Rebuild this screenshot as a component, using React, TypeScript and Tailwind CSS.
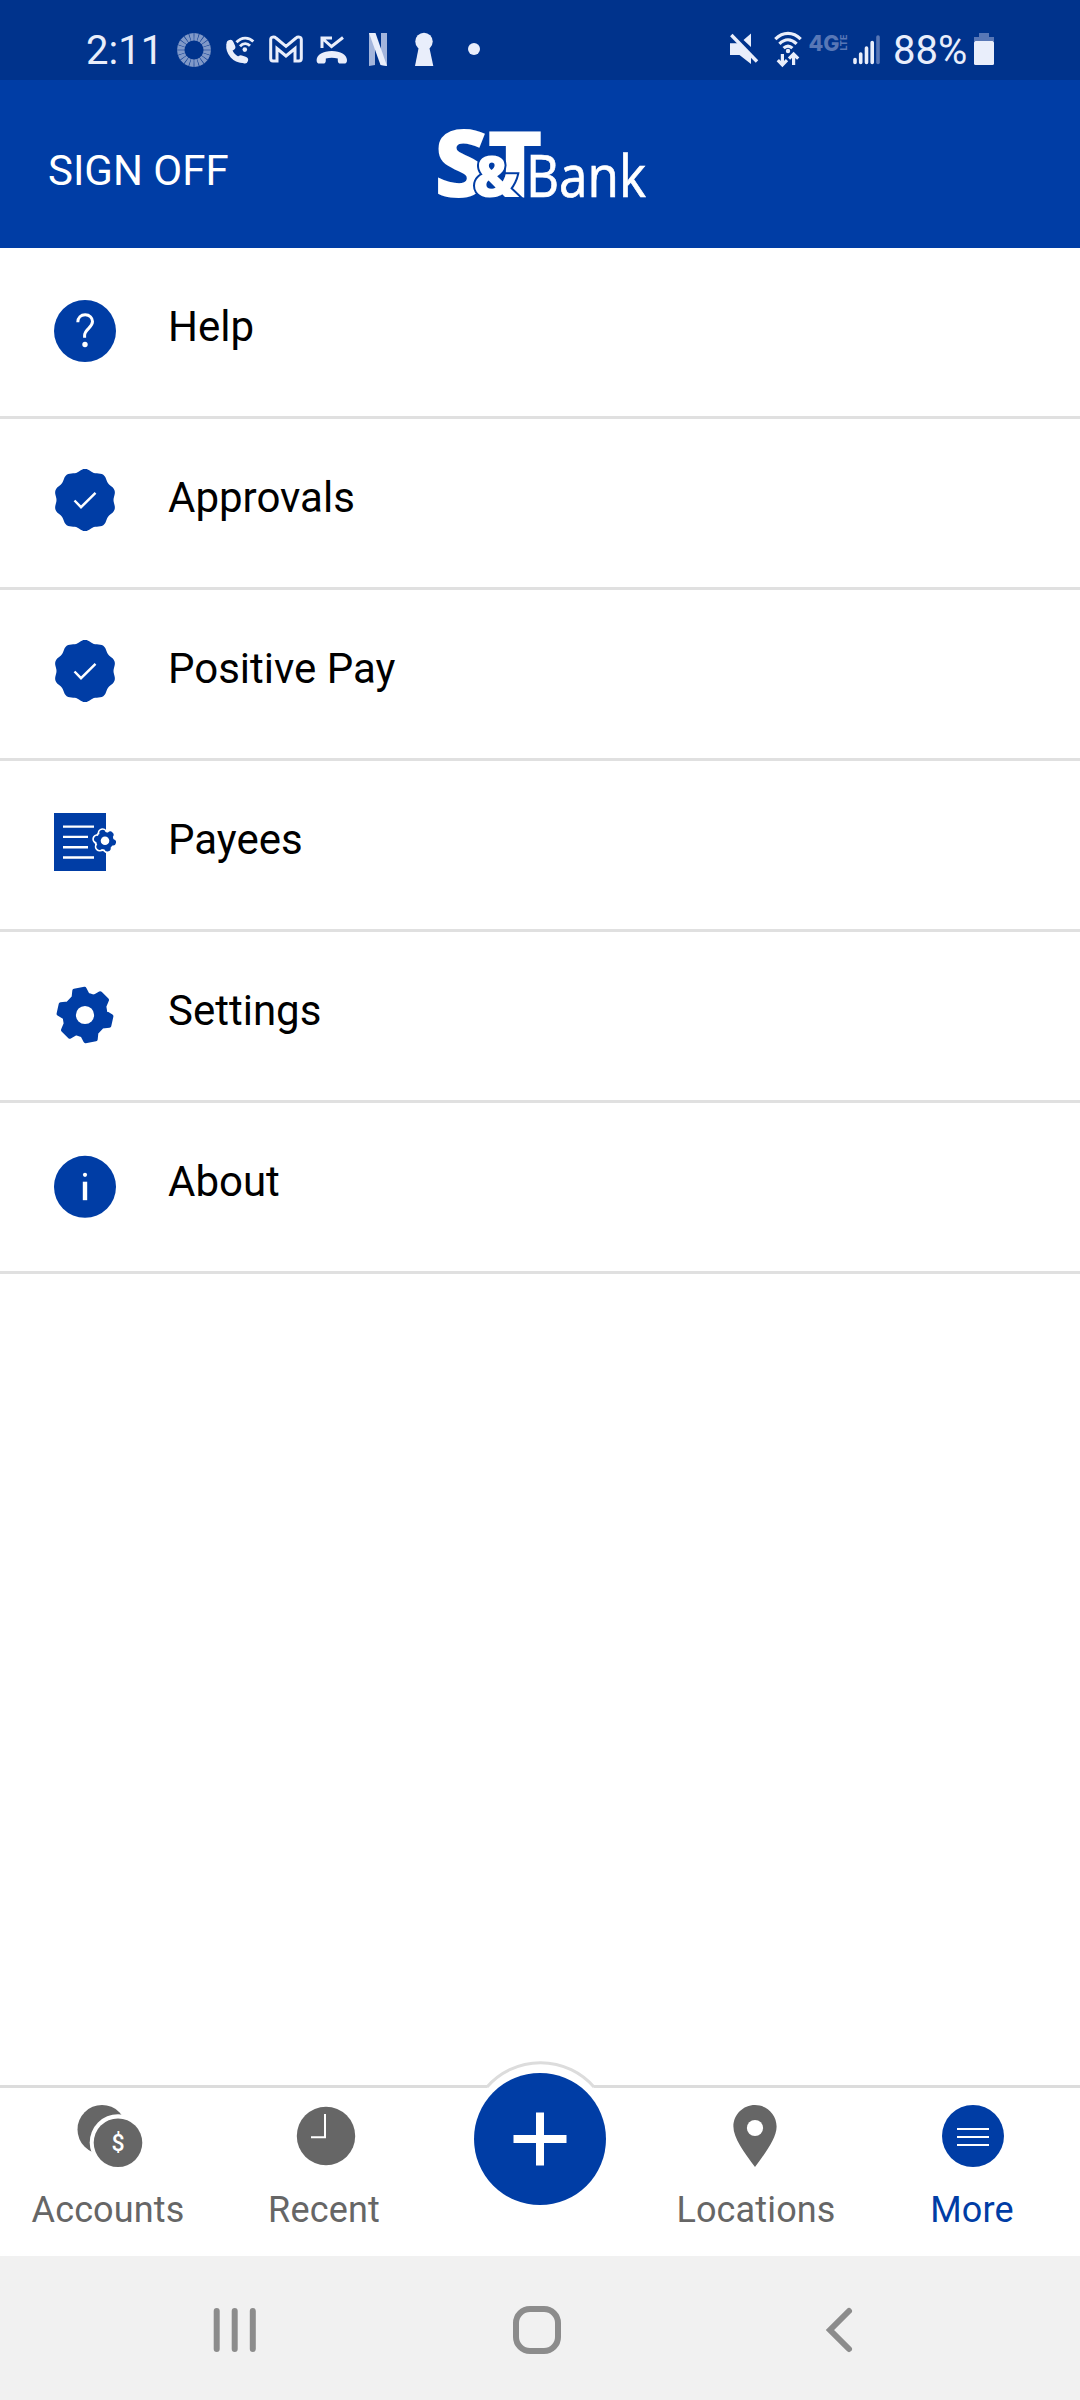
import React from "react";

const BLUE = "#003da5";
const GREY = "#666666";

// Round seal with ten soft bumps
const sealPath = (cx: number, cy: number) => {
	const points: string[] = [];
	for (let deg = 0; deg < 360; deg += 3) {
		const a = (deg * Math.PI) / 180;
		const r = 29.8 + 1.3 * Math.cos(10 * a);
		points.push(
			`${(cx + r * Math.sin(a)).toFixed(2)} ${(cy - r * Math.cos(a)).toFixed(2)}`,
		);
	}
	return `M${points.join("L")}Z`;
};

function HelpIcon() {
	return (
		<svg width="62" height="64" viewBox="0 0 62 64" fill="none">
			<circle cx="31" cy="33" r="31" fill={BLUE} />
			<path
				d="M23.8 24.3C23.8 19.6 27 16.8 31.2 16.8C35.5 16.8 38.5 19.8 38.5 23.6C38.5 26.6 36.9 28.2 34.7 30.3C32 32.8 30.6 34.2 30.6 37.3V39.7"
				stroke="white"
				strokeWidth="3"
			/>
			<circle cx="31" cy="46.5" r="2.7" fill="white" />
		</svg>
	);
}

function SealIcon() {
	return (
		<svg width="62" height="64" viewBox="0 0 62 64" fill="none">
			<path d={sealPath(31, 31)} fill={BLUE} />
			<path d="M20.5 31.5L27 38.2L41.5 23.8" stroke="white" strokeWidth="2.4" />
		</svg>
	);
}

function PayeesIcon() {
	const petals = [12, 72, 132, 192, 252, 312];
	return (
		<svg width="62" height="64" viewBox="0 0 62 64" fill="none">
			<path d="M0 2H52V60H0Z" fill={BLUE} />
			<path
				d="M9 15.6H40M9 25.9H34M9 36.2H34M9 46.5H40"
				stroke="white"
				strokeWidth="2.4"
			/>
			{/* white rim behind the small gear */}
			<g fill="white">
				<circle cx="51" cy="29.7" r="10.6" />
				{petals.map((deg) => (
					<circle
						key={deg}
						cx="59"
						cy="29.7"
						r="4.9"
						transform={`rotate(${deg} 51 29.7)`}
					/>
				))}
			</g>
			<g fill={BLUE}>
				<circle cx="51" cy="29.7" r="8.8" />
				{petals.map((deg) => (
					<circle
						key={deg}
						cx="59"
						cy="29.7"
						r="3.2"
						transform={`rotate(${deg} 51 29.7)`}
					/>
				))}
			</g>
			<circle cx="51" cy="29.7" r="4.3" fill="white" />
		</svg>
	);
}

function SettingsIcon() {
	return (
		<svg width="62" height="64" viewBox="0 0 62 64" fill="none">
			<g transform="translate(31 33)">
				<path
					d="M-10.7 -24.3L-.4 -26.2L2.6 -20.4L9.2 -18.2L15.2 -21.8L22 -15L19.3 -8.6L20.3 -2.6L26.4 1.2L24.3 10.7L17.3 11.4L11.4 17.6L10.7 24.3L.4 26.2L-2.6 20.4L-9.2 18.2L-15.2 21.8L-22 15L-19.3 8.6L-20.3 2.6L-26.4 -1.2L-24.3 -10.7L-17.3 -11.4L-11.4 -17.6Z"
					fill={BLUE}
					stroke={BLUE}
					strokeWidth="4"
					strokeLinejoin="round"
				/>
				<circle r="9.1" fill="white" />
			</g>
		</svg>
	);
}

function AboutIcon() {
	return (
		<svg width="62" height="66" viewBox="0 0 62 66" fill="none">
			<circle cx="31" cy="33.8" r="31" fill={BLUE} />
			<circle cx="31" cy="21.8" r="2.1" fill="white" />
			<path d="M31 28.7V47.2" stroke="white" strokeWidth="4.4" />
		</svg>
	);
}

function AccountsIcon() {
	return (
		<svg width="72" height="72" viewBox="0 0 72 72">
			<circle cx="30" cy="29.5" r="24.5" fill={GREY} />
			<circle cx="46" cy="42.5" r="28.3" fill="white" />
			<circle cx="46" cy="42.7" r="24.3" fill={GREY} />
			<text
				x="46"
				y="51"
				textAnchor="middle"
				fill="white"
				fontSize="23"
				fontFamily="Roboto, sans-serif"
				fontWeight="500"
			>
				$
			</text>
		</svg>
	);
}

function RecentIcon() {
	return (
		<svg width="72" height="72" viewBox="0 0 72 72" fill="none">
			<circle cx="38" cy="36" r="29.2" fill={GREY} />
			<path d="M37 14V37.2H23" stroke="white" strokeWidth="2" />
		</svg>
	);
}

function LocationsIcon() {
	return (
		<svg width="72" height="72" viewBox="0 0 72 72">
			<path
				d="M35 5C46.9 5 56.6 14.6 56.6 26.5C56.6 38 46 52 35 67C24 52 13.4 38 13.4 26.5C13.4 14.6 23.1 5 35 5Z"
				fill={GREY}
			/>
			<circle cx="35" cy="28" r="8.1" fill="white" />
		</svg>
	);
}

function MoreIcon() {
	return (
		<svg width="72" height="72" viewBox="0 0 72 72">
			<circle cx="37" cy="36" r="31" fill={BLUE} />
			<path d="M21 29H53M21 37H53M21 45H53" stroke="white" strokeWidth="2" />
		</svg>
	);
}

function BankLogo() {
	return (
		<svg
			className="ml-[202px]"
			width="220"
			height="168"
			viewBox="430 80 220 168"
			fill="white"
			fontFamily="'Open Sans', sans-serif"
		>
			<text
				x="434"
				y="196.5"
				fontSize="94"
				fontWeight="800"
				textLength="54"
				lengthAdjust="spacingAndGlyphs"
			>
				S
			</text>
			<text
				x="487"
				y="196.5"
				fontSize="93"
				fontWeight="800"
				textLength="56"
				lengthAdjust="spacingAndGlyphs"
			>
				T
			</text>
			<text
				x="473"
				y="196.5"
				fontSize="57"
				fontWeight="800"
				textLength="46"
				lengthAdjust="spacingAndGlyphs"
				stroke={BLUE}
				strokeWidth="4"
				paintOrder="stroke"
			>
				&amp;
			</text>
			<text
				x="526"
				y="196.5"
				fontSize="58"
				fontWeight="500"
				stroke="white"
				strokeWidth="0.7"
				textLength="120"
				lengthAdjust="spacingAndGlyphs"
			>
				Bank
			</text>
		</svg>
	);
}

function StatusBar() {
	const ringTicks = Array.from({ length: 20 }, (_, i) => i * 18);
	return (
		<div className="flex h-20 items-start bg-[#00338c] text-[40px] leading-[46px] text-[#e9eefb]">
			<span className="mt-[28px] ml-[86px] w-[80px]">2:11</span>
			<svg className="ml-[8px]" width="326" height="80" viewBox="174 0 326 80">
				{/* dashed ring */}
				<g fill="#8099c8">
					{ringTicks.map((deg) => (
						<path
							key={deg}
							d="M191.7 33.2H196.3L195.3 40.6H192.7Z"
							transform={`rotate(${deg + 9} 194 50)`}
						/>
					))}
				</g>
				{/* wifi calling */}
				<g fill="none" stroke="#e9eefb">
					<path
						d="M229 44C228 53 235 60.5 243.5 60"
						strokeWidth="5.4"
					/>
					<path
						d="M230.2 43.5L231.8 47M240.8 58.8L244.6 60"
						strokeWidth="7"
						strokeLinecap="round"
					/>
					<path
						d="M236.5 42.3C241.5 36.8 248.8 36.8 253.3 41.5M240 46.2C243.2 42.8 247.2 42.8 250 45.7"
						strokeWidth="2.8"
					/>
				</g>
				<circle cx="244.8" cy="49.6" r="2.3" fill="#e9eefb" />
				{/* mail */}
				<path
					d="M270.7 39.5C270.7 37 274 36.2 276 38L286 46.3L296 38C298 36.2 301.3 37 301.3 39.5V58.5C301.3 60.5 300.5 61 299 61H295V48.5L286 56L277 48.5V61H273C271.5 61 270.7 60.5 270.7 58.5Z"
					fill="none"
					stroke="#e9eefb"
					strokeWidth="3"
				/>
				{/* missed call */}
				<path
					d="M322 48V38H332M323 39L331.5 46.5L343 37.5"
					fill="none"
					stroke="#e9eefb"
					strokeWidth="3"
				/>
				<path
					d="M316.6 60C317 54.5 323 51 331.8 51C340.6 51 346.6 54.5 347 60C347 62.6 346 63.6 344 63.6H340.6C338.5 63.6 337.8 62.4 337.8 60.5V58.6C334 57.6 329.6 57.6 325.8 58.6V60.5C325.8 62.4 325 63.6 323 63.6H319.6C317.6 63.6 316.6 62.6 316.6 60Z"
					fill="#e9eefb"
				/>
				{/* striped ribbon */}
				<path d="M369 33H375V65L369 66ZM381 33H387V66L381 65Z" fill="#a3b5dc" />
				<path d="M369 33H375.5L387 66L380.5 65Z" fill="#e9eefb" />
				{/* keyhole */}
				<circle cx="424" cy="41.5" r="8.7" fill="#e9eefb" />
				<path d="M419 46H429L433.3 66H415Z" fill="#e9eefb" />
				<circle cx="474" cy="49" r="6" fill="#e9eefb" />
			</svg>
			<svg className="ml-[225px]" width="160" height="80" viewBox="725 0 160 80">
				{/* muted speaker */}
				<path
					d="M730 43.2H738.5L751 55.5V64L739.5 55H730ZM751 33.4V47L743.5 40Z"
					fill="#e9eefb"
				/>
				<path d="M731.3 35L757 61.5" stroke="#e9eefb" strokeWidth="3.4" />
				{/* wifi with transfer arrows */}
				<g fill="none" stroke="#e9eefb" strokeWidth="3.2">
					<path d="M775.3 39.2C783 31.4 793 31.4 800.7 39.2M779.4 43.8C784.8 38.4 791.2 38.4 796.6 43.8M783.6 48.2C786.6 45.4 789.4 45.4 792.4 48.2" />
					<path d="M782.4 54V64M777.8 60.2L782.4 65L787 60.2M793.6 65V55M789 58.6L793.6 54L798.2 58.6" />
				</g>
				<circle cx="788" cy="51" r="2.2" fill="#e9eefb" />
				{/* network type */}
				<g
					fill="#5877b6"
					fontFamily="Inter, sans-serif"
					fontWeight="800"
				>
					<text
						x="808.5"
						y="50.5"
						fontSize="21.5"
						textLength="31"
						lengthAdjust="spacingAndGlyphs"
					>
						4G
					</text>
					<text
						x="0"
						y="0"
						fontSize="9"
						textLength="16"
						lengthAdjust="spacingAndGlyphs"
						transform="translate(847 50.5) rotate(-90)"
					>
						LTE
					</text>
				</g>
				{/* signal strength */}
				<g strokeWidth="3.6" strokeLinecap="round" stroke="#e9eefb">
					<path d="M855 59.5V62.5M860.7 54V62.5M866.5 48V62.5M872.2 42.5V62.5" />
					<path d="M878 37V62.5" stroke="#5877b6" />
				</g>
			</svg>
			<span className="mt-[28px] ml-[8px] w-[77px] whitespace-nowrap">88%</span>
			<svg className="ml-[4px]" width="20" height="80" viewBox="974 0 20 80">
				<path d="M979 33H989V37H994V41H974V37H979Z" fill="#5877b6" />
				<rect x="974" y="41" width="20" height="24" rx="1.5" fill="#e9eefb" />
			</svg>
		</div>
	);
}

const menuItems = [
	{ label: "Help", icon: <HelpIcon /> },
	{ label: "Approvals", icon: <SealIcon /> },
	{ label: "Positive Pay", icon: <SealIcon /> },
	{ label: "Payees", icon: <PayeesIcon /> },
	{ label: "Settings", icon: <SettingsIcon /> },
	{ label: "About", icon: <AboutIcon /> },
];

function Tab({
	label,
	active,
	children,
}: {
	label: string;
	active?: boolean;
	children: React.ReactNode;
}) {
	return (
		<button
			className={`flex flex-col items-center gap-[17px] pt-3 text-[36px] leading-[42px] tracking-[0.15px] ${
				active ? "text-[#003da5]" : "text-[#666666]"
			}`}
		>
			{children}
			<span>{label}</span>
		</button>
	);
}

export default function App() {
	return (
		<div className="flex h-[2400px] w-[1080px] flex-col bg-white font-['Roboto',sans-serif]">
			<StatusBar />

			<header className="flex h-[168px] items-start bg-[#003da5] text-white">
				<button className="mt-[66px] ml-12 w-[180px] text-left text-[42px] leading-[50px] whitespace-nowrap">
					SIGN OFF
				</button>
				<BankLogo />
			</header>

			<main className="flex-1">
				{menuItems.map((item) => (
					<div
						key={item.label}
						className="flex h-[171px] items-start gap-[52px] border-b-3 border-[#e0e0e0] pl-[54px]"
					>
						<div className="pt-[50px]">{item.icon}</div>
						<span className="pt-[54px] text-[42px] leading-[50px] text-black">
							{item.label}
						</span>
					</div>
				))}
			</main>

			{/* Bottom tabs */}
			<nav className="grid h-[171px] grid-cols-5 border-t-3 border-[#dcdcdc]">
				<Tab label="Accounts">
					<AccountsIcon />
				</Tab>
				<Tab label="Recent">
					<RecentIcon />
				</Tab>
				<div className="relative">
					{/* raised button sits over the top border */}
					<svg
						className="absolute -top-[30px] left-[36px]"
						width="144"
						height="150"
						viewBox="468 2058 144 150"
						fill="none"
					>
						<path
							d="M486 2089A70.5 70.5 0 0 1 595 2089Z"
							fill="white"
						/>
						<path
							d="M487 2087A71 71 0 0 1 594 2087"
							stroke="#dcdcdc"
							strokeWidth="3"
						/>
						<circle cx="540" cy="2139" r="66" fill={BLUE} />
						<path
							d="M513.5 2139H566.5M540 2112.5V2165.5"
							stroke="white"
							strokeWidth="8"
						/>
					</svg>
				</div>
				<Tab label="Locations">
					<LocationsIcon />
				</Tab>
				<Tab label="More" active>
					<MoreIcon />
				</Tab>
			</nav>

			{/* System navigation */}
			<div className="flex h-[144px] items-center bg-[#f1f1f1] pt-[4px]">
				<svg className="ml-[210px]" width="50" height="50" viewBox="210 0 50 50">
					<path
						d="M216.7 6V44M234.7 6V44M252.8 6V44"
						stroke="#8c8c8c"
						strokeWidth="6"
						strokeLinecap="round"
					/>
				</svg>
				<div className="ml-[253px] size-12 rounded-[17px] border-6 border-[#8c8c8c]" />
				<svg className="ml-[260px]" width="36" height="50" viewBox="0 0 36 50">
					<path
						d="M28 6L9 25L28 44"
						fill="none"
						stroke="#8c8c8c"
						strokeWidth="6"
						strokeLinecap="round"
					/>
				</svg>
			</div>
		</div>
	);
}
